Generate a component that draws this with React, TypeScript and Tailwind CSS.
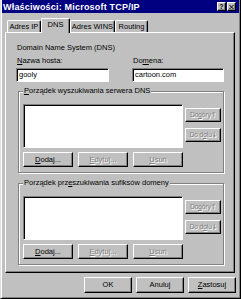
import React from "react";

const raised =
  "border border-t-white border-l-white border-r-black border-b-black shadow-[inset_-1px_-1px_0_#808080]";
const sunken =
  "border border-t-[#808080] border-l-[#808080] border-r-white border-b-white shadow-[inset_1px_1px_0_#000]";

function Btn({
  children,
  disabled,
  className,
}: {
  children: React.ReactNode;
  disabled?: boolean;
  className?: string;
}) {
  return (
    <div
      className={`${raised} flex items-center justify-center bg-[#c0c0c0] leading-[10px] whitespace-nowrap ${
        disabled ? "text-[#808080] [text-shadow:1px_1px_0_#fff]" : "text-black"
      } ${className ?? ""}`}
    >
      {children}
    </div>
  );
}

function Group({ label, className }: { label: React.ReactNode; className?: string }) {
  return (
    <div
      className={`relative ml-[12px] w-[206px] h-[82px] border border-[#808080] shadow-[1px_1px_0_#fff,inset_1px_1px_0_#fff] ${
        className ?? ""
      }`}
    >
      {/* legend over the etched line */}
      <span className="absolute left-[4px] top-[-6px] bg-[#c0c0c0] px-[1px] leading-[10px] whitespace-nowrap">
        {label}
      </span>
      <div className="flex pl-[4px] pt-[12px]">
        <div>
          <div className={`${sunken} w-[160px] h-[44px] bg-white`} />
          <div className="flex gap-[5px] mt-[4px]">
            <Btn className="w-[50px] h-[15px]">
              <u>D</u>odaj...
            </Btn>
            <Btn disabled className="w-[50px] h-[15px]">
              <u>E</u>dytuj...
            </Btn>
            <Btn disabled className="w-[50px] h-[15px]">
              <u>U</u>suń
            </Btn>
          </div>
        </div>
        <div className="flex flex-col gap-[6px] ml-[2px] mt-[4px]">
          <Btn disabled className="w-[36px] h-[14px] text-[7px] tracking-[-0.3px] font-['DejaVu_Sans_Condensed','Liberation_Sans',sans-serif]">
            Do <u>g</u>óry↑
          </Btn>
          <Btn disabled className="w-[36px] h-[14px] text-[7px] tracking-[-0.3px] font-['DejaVu_Sans_Condensed','Liberation_Sans',sans-serif]">
            Do d<u>o</u>łu↓
          </Btn>
        </div>
      </div>
    </div>
  );
}

function Tab({
  children,
  active,
  className,
}: {
  children: React.ReactNode;
  active?: boolean;
  className?: string;
}) {
  return (
    <div
      className={`flex items-center justify-center whitespace-nowrap rounded-t-[2px] border-l border-t border-l-white border-t-white border-r border-r-black shadow-[inset_-1px_0_0_#808080] bg-[#c0c0c0] leading-[10px] ${
        active ? "relative z-10 h-[15px] mb-[-1px] pb-[2px]" : "h-[12px]"
      } ${className ?? ""}`}
    >
      {children}
    </div>
  );
}

export default function App() {
  return (
    <div className="flex flex-col w-[241px] h-[299px] bg-[#c0c0c0] border border-t-0 border-l-[#dfdfdf] border-r-black border-b-black shadow-[inset_1px_0_0_#fff,inset_-1px_-1px_0_#808080] px-[1px] pb-[1px] font-['Liberation_Sans',Arial,sans-serif] text-[7.5px] text-black overflow-hidden">
      {/* Title bar */}
      <div className="flex items-center h-[13px] bg-[#000080] pl-[1px] pr-[3px]">
        <span className="flex-1 text-white font-bold text-[9px] tracking-[0.2px] leading-[10px] whitespace-nowrap">
          Właściwości: Microsoft TCP/IP
        </span>
        <div className="flex gap-[1px]">
          <div className={`${raised} w-[9px] h-[9px] flex items-center justify-center bg-[#c0c0c0] text-[7px] font-bold leading-none`}>
            ?
          </div>
          <div className={`${raised} w-[9px] h-[9px] flex items-center justify-center bg-[#c0c0c0]`}>
            <svg width="5" height="4" viewBox="0 0 5 4" className="block">
              <path d="M0 0h1l1.5 1.5L4 0h1L3 2l2 2H4L2.5 2.5 1 4H0l2-2z" fill="#000" />
            </svg>
          </div>
        </div>
      </div>

      {/* Tabs */}
      <div className="flex items-end h-[14px] mt-[5px] ml-[5px]">
        <Tab className="w-[34px]">Adres IP</Tab>
        <Tab active className="w-[29px]">
          DNS
        </Tab>
        <Tab className="w-[45px]">Adres WINS</Tab>
        <Tab className="w-[33px]">Routing</Tab>
      </div>

      {/* Tab panel */}
      <div className="flex flex-col ml-[3px] w-[230px] h-[241px] border border-t-white border-l-white border-r-black border-b-black shadow-[inset_-1px_-1px_0_#808080]">
        <div className="ml-[11px] mt-[10px] leading-[10px]">Domain Name System (DNS)</div>
        <div className="flex mt-[3px] ml-[10px] gap-[23px]">
          <div className="w-[93px]">
            <div className="pl-[1px] leading-[10px]">
              <u>N</u>azwa hosta:
            </div>
            <div className={`${sunken} mt-[2px] h-[14px] bg-white pl-[2px] flex items-center leading-[10px]`}>
              gooly
            </div>
          </div>
          <div className="w-[92px]">
            <div className="pl-[1px] leading-[10px]">
              Do<u>m</u>ena:
            </div>
            <div className={`${sunken} mt-[2px] h-[14px] bg-white pl-[2px] flex items-center leading-[10px]`}>
              cartoon.com
            </div>
          </div>
        </div>
        <Group
          className="mt-[9px]"
          label={
            <>
              <u>P</u>orządek wyszukiwania serwera DNS
            </>
          }
        />
        <Group
          className="mt-[10px]"
          label={
            <>
              Porządek prz<u>e</u>szukiwania sufiksów domeny
            </>
          }
        />
      </div>

      {/* Dialog buttons */}
      <div className="flex justify-end gap-[4px] mt-[4px] pr-[3px]">
        <Btn className="w-[48px] h-[16px]">OK</Btn>
        <Btn className="w-[48px] h-[16px]">Anuluj</Btn>
        <Btn className="w-[48px] h-[16px]">
          <u>Z</u>astosuj
        </Btn>
      </div>
    </div>
  );
}
